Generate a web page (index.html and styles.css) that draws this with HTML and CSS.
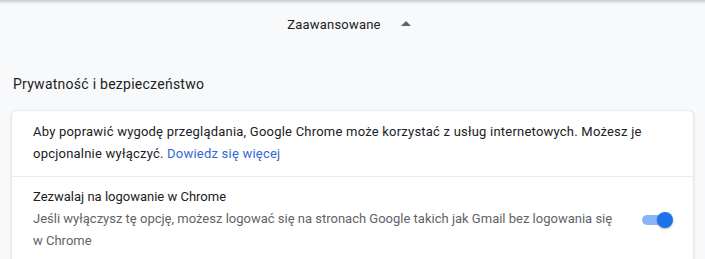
FILE: index.html
```html
<!DOCTYPE html>
<html lang="pl">
<head>
  <meta charset="UTF-8">
  <title>Ustawienia - Zaawansowane</title>
  <link rel="stylesheet" href="styles.css">
</head>
<body>
  <div class="toolbar-shadow"></div>

  <div class="advanced-toggle">
    <span>Zaawansowane</span>
    <span class="arrow"></span>
  </div>

  <h2 class="section-title">Prywatność i bezpieczeństwo</h2>

  <div class="card">
    <div class="row intro">
      Aby poprawić wygodę przeglądania, Google Chrome może korzystać z usług internetowych. Możesz je
      opcjonalnie wyłączyć. <a href="#">Dowiedz się więcej</a>
    </div>
    <div class="row setting">
      <div class="setting-text">
        <div class="label">Zezwalaj na logowanie w Chrome</div>
        <div class="sublabel">Jeśli wyłączysz tę opcję, możesz logować się na stronach Google takich jak Gmail bez logowania się w Chrome</div>
      </div>
      <div class="toggle on">
        <div class="track"></div>
        <div class="knob"></div>
      </div>
    </div>
  </div>
</body>
</html>
```

FILE: styles.css
```css
body {
  margin: 0;
  font-family: Roboto, "Liberation Sans", sans-serif;
  background-color: #f8f9fa;
  color: #202124;
  font-size: 13px;
  overflow: hidden;
}
.toolbar-shadow {
  height: 4px;
  background: linear-gradient(#c8c9cb, #f8f9fa);
}
.advanced-toggle {
  display: flex;
  justify-content: center;
  align-items: center;
  gap: 20px;
  height: 40px;
  padding-right: 7px;
  font-size: 13px;
  letter-spacing: 0.2px;
  color: #202124;
}
.arrow {
  width: 0;
  height: 0;
  border-left: 5px solid transparent;
  border-right: 5px solid transparent;
  border-bottom: 5px solid #5f6368;
  margin-top: -2px;
}
.section-title {
  margin: 0;
  padding: 29px 13px 16px;
  font-size: 14px;
  font-weight: 400;
  letter-spacing: 0.26px;
  color: #202124;
  line-height: 22px;
}
.card {
  margin: 0 12px;
  background: #fff;
  border-radius: 4px;
  box-shadow: 0 0 1px rgba(60, 64, 67, 0.3), 0 1px 3px 1px rgba(60, 64, 67, 0.1);
}
.row {
  padding: 10px 20px 11px 21px;
  line-height: 22px;
}
.intro {
  letter-spacing: 0.22px;
}
.intro a {
  color: #3367d6;
  text-decoration: none;
}
.setting {
  border-top: 1px solid #e8eaed;
  display: flex;
  align-items: center;
  padding-top: 9px;
}
.setting-text {
  flex: 1;
  padding-right: 24px;
}
.sublabel {
  color: #5f6368;
}
.toggle {
  position: relative;
  width: 31px;
  height: 16px;
  margin-top: 2px;
}
.toggle .track {
  position: absolute;
  left: 0;
  top: 3px;
  width: 26px;
  height: 10px;
  border-radius: 5px;
  background: #8ab4f8;
}
.toggle .knob {
  position: absolute;
  right: 0;
  top: 0;
  width: 16px;
  height: 16px;
  border-radius: 50%;
  background: #1a73e8;
  box-shadow: 0 1px 2px rgba(0, 0, 0, 0.3);
}
```
